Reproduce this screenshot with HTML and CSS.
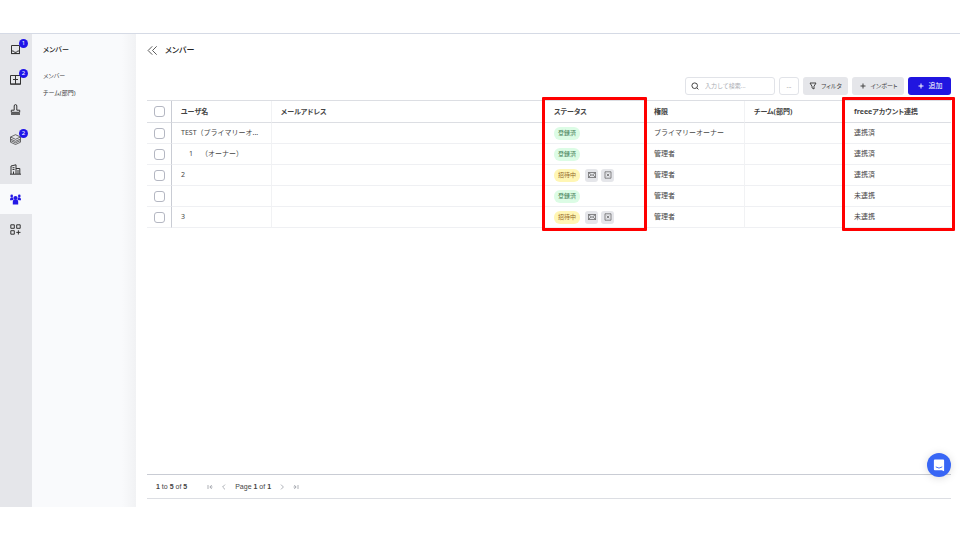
FILE: index.html
```html
<!DOCTYPE html>
<html lang="ja">
<head>
    <meta charset="UTF-8">
    <meta name="viewport" content="width=device-width, initial-scale=1.0">
    <title>メンバー</title>
    <link rel="stylesheet" href="styles.css">
</head>
<body>
    <div class="app">
        <nav class="rail" aria-label="メインメニュー">
            <a href="#" class="rail-item" aria-label="受信箱">
                <svg class="rail-icon" viewBox="0 0 11 11"><path d="M1.500 1.500h8v8h-8zM1.500 7h2l1 1.300h2l1-1.300h2M1 9.600h9"/></svg>
                <span class="badge">1</span>
            </a>
            <a href="#" class="rail-item" aria-label="ボード">
                <svg class="rail-icon" viewBox="0 0 11 11"><path d="M.5 1.500h10v8.500H.5zM5.500 1.500v8.500M3 5.500h5M.2 10.200h10.600"/></svg>
                <span class="badge">2</span>
            </a>
            <a href="#" class="rail-item" aria-label="承認">
                <svg class="rail-icon" viewBox="0 0 11 11"><path d="M1.300 8.300V6.200h2.900V2q0-1.400 1.300-1.400T6.800 2v4.200h2.900v2.100z"/><path d="M1 10h9" stroke-width="1.500"/></svg>
            </a>
            <a href="#" class="rail-item" aria-label="レイヤー">
                <svg class="rail-icon layers" viewBox="0 0 11 11"><path d="M5.500.7l5 2.300-5 2.300-5-2.300zM.5 3v2l5 2.300 5-2.300V3M.5 5v1.500l5 2.300 5-2.300V5M.5 6.500v1.700l5 2.300 5-2.300V6.500"/></svg>
                <span class="badge">2</span>
            </a>
            <a href="#" class="rail-item" aria-label="会社">
                <svg class="rail-icon" viewBox="0 0 11 11"><path d="M1 10V2l5-1.200V10M6 4.500h3.800V10M0 10.200h11M3.500 10V7.500M2.500 3.700h2M2.500 5.500h2M8 6v4"/></svg>
            </a>
            <a href="#" class="rail-item active" aria-label="メンバー">
                <svg class="rail-icon solid" viewBox="0 0 11 11"><circle cx="5.500" cy="4" r="2.100"/><circle cx="1.700" cy="1.900" r="1.300"/><circle cx="9.300" cy="1.900" r="1.300"/><path d="M2.800 10.600V7.800q0-2.200 2.700-2.200t2.700 2.200v2.800zM0 6.300q0-3.100 1.800-3.100L3 3.500q0 1.200.6 2L2.400 6.300zM11 6.300q0-3.100-1.800-3.100L8 3.500q0 1.200-.6 2l1.200.8z"/></svg>
            </a>
            <a href="#" class="rail-item" aria-label="アプリ">
                <svg class="rail-icon" viewBox="0 0 11 11"><path d="M.8.8h3.500v3.500H.8zM6.700.8h3.500v3.500H6.700zM.8 6.700h3.500v3.500H.8zM8.400 6.300v4.200M6.300 8.400h4.200"/></svg>
            </a>
        </nav>

        <aside class="sidebar">
            <h2 class="sidebar-title">メンバー</h2>
            <a href="#" class="sidebar-link">メンバー</a>
            <a href="#" class="sidebar-link">チーム(部門)</a>
        </aside>

        <main class="main">
            <header class="page-header">
                <button type="button" class="collapse" aria-label="メニューを閉じる">
                    <svg viewBox="0 0 10 10"><path d="M4.800 1.200L1 5l3.800 3.800M8.800 1.200L5 5l3.800 3.800"/></svg>
                </button>
                <h1 class="page-title">メンバー</h1>
            </header>

            <div class="toolbar">
                <label class="search">
                    <svg viewBox="0 0 8 8"><circle cx="3.700" cy="3.700" r="2.800"/><path d="M5.800 5.800l1.600 1.600"/></svg>
                    <input type="search" aria-label="検索" placeholder="入力して検索...">
                </label>
                <button type="button" class="btn btn-more">...</button>
                <button type="button" class="btn btn-filter">
                    <svg viewBox="0 0 8 8"><path d="M1 1h6L5 4.300V7L3 5.800V4.300z"/></svg>フィルタ
                </button>
                <button type="button" class="btn btn-import">
                    <svg viewBox="0 0 8 8"><path d="M4 1.500v5M1.500 4h5"/></svg>インポート
                </button>
                <button type="button" class="btn btn-add">
                    <svg viewBox="0 0 8 8"><path d="M4 1.500v5M1.500 4h5"/></svg>追加
                </button>
            </div>

            <div class="table-wrap">
                <table class="members">
                    <thead>
                        <tr>
                            <th class="col-check"><input type="checkbox" aria-label="すべて選択"></th>
                            <th class="col-name">ユーザ名</th>
                            <th>メールアドレス</th>
                            <th class="col-status">ステータス</th>
                            <th class="col-role">権限</th>
                            <th class="col-team">チーム(部門)</th>
                            <th class="col-freee">freeeアカウント連携</th>
                        </tr>
                    </thead>
                    <tbody>
                        <tr>
                            <td class="col-check"><input type="checkbox" aria-label="TESTを選択"></td>
                            <td>TEST（プライマリーオ...</td>
                            <td></td>
                            <td><span class="tag tag-done">登録済</span></td>
                            <td>プライマリーオーナー</td>
                            <td></td>
                            <td>連携済</td>
                        </tr>
                        <tr>
                            <td class="col-check"><input type="checkbox" aria-label="1を選択"></td>
                            <td><span class="indent">1</span>（オーナー）</td>
                            <td></td>
                            <td><span class="tag tag-done">登録済</span></td>
                            <td>管理者</td>
                            <td></td>
                            <td>連携済</td>
                        </tr>
                        <tr>
                            <td class="col-check"><input type="checkbox" aria-label="2を選択"></td>
                            <td>2</td>
                            <td></td>
                            <td>
                                <div class="status">
                                    <span class="tag tag-wait">招待中</span>
                                    <button type="button" class="mini" aria-label="再送"><svg viewBox="0 0 8 8"><path d="M.5 1.500h7v5h-7zM.5 1.500L4 4.500l3.500-3M.5 6.500l2.600-2.700M7.500 6.500L4.900 3.800"/></svg></button>
                                    <button type="button" class="mini" aria-label="取消"><svg viewBox="0 0 8 8"><path d="M1 .8h6v6.400H1zM2.800 2.800l2.400 2.400M5.200 2.800L2.800 5.200"/></svg></button>
                                </div>
                            </td>
                            <td>管理者</td>
                            <td></td>
                            <td>連携済</td>
                        </tr>
                        <tr>
                            <td class="col-check"><input type="checkbox" aria-label="メンバーを選択"></td>
                            <td></td>
                            <td></td>
                            <td><span class="tag tag-done">登録済</span></td>
                            <td>管理者</td>
                            <td></td>
                            <td>未連携</td>
                        </tr>
                        <tr>
                            <td class="col-check"><input type="checkbox" aria-label="3を選択"></td>
                            <td>3</td>
                            <td></td>
                            <td>
                                <div class="status">
                                    <span class="tag tag-wait">招待中</span>
                                    <button type="button" class="mini" aria-label="再送"><svg viewBox="0 0 8 8"><path d="M.5 1.500h7v5h-7zM.5 1.500L4 4.500l3.500-3M.5 6.500l2.600-2.700M7.500 6.500L4.900 3.800"/></svg></button>
                                    <button type="button" class="mini" aria-label="取消"><svg viewBox="0 0 8 8"><path d="M1 .8h6v6.400H1zM2.800 2.800l2.400 2.400M5.200 2.800L2.800 5.200"/></svg></button>
                                </div>
                            </td>
                            <td>管理者</td>
                            <td></td>
                            <td>未連携</td>
                        </tr>
                    </tbody>
                </table>
                <div class="mark mark-status"></div>
                <div class="mark mark-freee"></div>
            </div>

            <footer class="pager">
                <span class="pager-count"><b>1</b> to <b>5</b> of <b>5</b></span>
                <button type="button" aria-label="最初"><svg viewBox="0 0 6 6"><path d="M1 1v4M4.800 1l-2 2 2 2M3 3h2.500"/></svg></button>
                <button type="button" aria-label="前へ"><svg viewBox="0 0 6 6"><path d="M4 .6L1.600 3 4 5.400"/></svg></button>
                <span>Page <b>1</b> of <b>1</b></span>
                <button type="button" aria-label="次へ"><svg viewBox="0 0 6 6"><path d="M2 .6L4.400 3 2 5.400"/></svg></button>
                <button type="button" aria-label="最後"><svg viewBox="0 0 6 6"><path d="M5 1v4M1.200 1l2 2-2 2M3 3H.5"/></svg></button>
            </footer>
        </main>
    </div>

    <button type="button" class="chat" aria-label="チャット">
        <svg viewBox="0 0 12 14"><path class="chat-body" d="M1.500.5h9q1 0 1 1v11.800L9 12H1.500q-1 0-1-1V1.500q0-1 1-1z"/><path class="chat-smile" d="M2.500 8.500q3.500 2.600 7 0"/></svg>
    </button>
</body>
</html>
```

FILE: styles.css
```css
* {
    box-sizing: border-box;
}
body {
    display: flex;
    flex-direction: column;
    min-height: 100vh;
    margin: 0;
    padding: 33px 0;
    background-color: #fff;
    color: #444;
    font-family: "Noto Sans", "Noto Sans CJK JP", sans-serif;
    font-size: 7px;
    line-height: 10px;
}
h1, h2 {
    margin: 0;
    color: #222;
    font-weight: 500;
}
a {
    color: inherit;
    text-decoration: none;
}
button {
    padding: 0;
    border: none;
    background: none;
    color: inherit;
    font: inherit;
    cursor: pointer;
}
svg {
    flex: none;
    fill: none;
    stroke: currentColor;
}
.app {
    display: flex;
    flex: 1;
    border-top: 1px solid #d5dae5;
}

/* left icon rail */
.rail {
    width: 32px;
    background-color: #e5e6ea;
}
.rail-item {
    position: relative;
    display: flex;
    align-items: center;
    height: 30px;
    padding-left: 10px;
    color: #333;
}
.rail-item.active {
    background-color: #f9fafc;
    color: #2418e6;
}
.rail-icon {
    width: 11px;
    height: 11px;
}
.rail-icon.solid {
    fill: currentColor;
    stroke: none;
}
.rail-icon.layers {
    stroke-width: 0.7;
}
.badge {
    position: absolute;
    top: 5px;
    right: 4px;
    width: 9px;
    height: 9px;
    border-radius: 50%;
    background-color: #2015e8;
    color: #fff;
    font-size: 6px;
    line-height: 9px;
    text-align: center;
}

/* sub menu */
.sidebar {
    width: 104px;
    padding: 10px 11px;
    background: linear-gradient(to right, #f9fafc 90px, #f1f2f4);
    font-feature-settings: "palt";
}
.sidebar-title {
    margin-bottom: 15px;
    font-size: 7px;
    line-height: 12px;
}
.sidebar-link {
    display: block;
    margin-bottom: 7px;
    font-size: 6px;
}

.main {
    display: flex;
    flex: 1;
    flex-direction: column;
    min-width: 0;
    padding: 9px 9px 8px 11px;
}
.page-header {
    display: flex;
    align-items: center;
    gap: 7px;
    height: 14px;
}
.collapse,
.collapse svg {
    display: block;
    width: 11px;
    height: 11px;
}
.collapse svg {
    stroke-width: 0.8;
}
.page-title {
    font-size: 8px;
    font-feature-settings: "palt";
}

.toolbar {
    display: flex;
    justify-content: flex-end;
    gap: 4px;
    margin-top: 20px;
}
.search,
.btn {
    display: flex;
    align-items: center;
    height: 18px;
    border-radius: 3px;
}
.search {
    gap: 6px;
    width: 90px;
    padding: 0 5px;
    border: 1px solid #e1e3e8;
}
.search svg,
.btn svg {
    width: 8px;
    height: 8px;
}
.search input {
    width: 100%;
    min-width: 0;
    padding: 0;
    border: none;
    outline: none;
    background: none;
    font: inherit;
    font-size: 6px;
}
.search input::placeholder {
    color: #a9acb3;
}
.btn {
    justify-content: center;
    gap: 4px;
    background-color: #e5e6ea;
    font-size: 6px;
    font-feature-settings: "palt";
}
.btn-more {
    width: 20px;
    border: 1px solid #e1e3e8;
    background-color: #fff;
    color: #888;
}
.btn-filter {
    width: 45px;
}
.btn-import {
    width: 52px;
}
.btn-add {
    width: 43px;
    background-color: #2015e0;
    color: #fff;
    font-size: 7px;
}

/* member list */
.table-wrap {
    position: relative;
    margin-top: 5px;
}
.members {
    width: 100%;
    table-layout: fixed;
    border-collapse: separate;
    border-spacing: 0;
    border-top: 1px solid #dcdee3;
}
th, td {
    height: 21px;
    padding: 0 9px;
    border-right: 1px solid #f1f2f4;
    border-bottom: 1px solid #eff0f3;
    text-align: left;
    white-space: nowrap;
}
th {
    height: 22px;
    border-bottom-color: #dcdee3;
    font-weight: 700;
    font-feature-settings: "palt";
}
th:nth-child(3), td:nth-child(3),
th:nth-child(4), td:nth-child(4),
th:last-child, td:last-child {
    border-right: none;
}
.col-check {
    width: 25px;
    padding: 0 6px 0 7px;
    border-right-color: #c9ccd4;
}
.col-name,
.col-status,
.col-role,
.col-team {
    width: 100px;
}
.col-freee {
    width: 106px;
}
.members input {
    display: block;
    width: 11px;
    height: 11px;
    margin: 0;
    appearance: none;
    border: 1px solid #b4b7c2;
    border-radius: 3px;
    background-color: #fff;
}
.indent {
    margin: 0 8px;
}
.status {
    display: flex;
    align-items: center;
    gap: 3px;
}
.tag {
    display: inline-block;
    padding: 0 4px;
    border-radius: 6px;
    font-size: 6px;
    line-height: 13px;
    vertical-align: middle;
}
.tag-done {
    background-color: #dcfce5;
    color: #3d7a52;
}
.tag-wait {
    margin-right: 2px;
    background-color: #fff6b5;
    color: #94682a;
}
.mini {
    display: flex;
    align-items: center;
    justify-content: center;
    width: 13px;
    height: 13px;
    border-radius: 3px;
    background-color: #e5e6ea;
}
.mini svg {
    width: 8px;
    height: 8px;
    stroke-width: 0.6;
}

/* highlighted columns */
.mark {
    position: absolute;
    top: -3px;
    bottom: -3px;
    border: 3px solid #f00;
    border-radius: 1px;
    pointer-events: none;
}
.mark-status {
    right: 304px;
    width: 105px;
}
.mark-freee {
    right: -4px;
    width: 113px;
}

.pager {
    display: flex;
    align-items: center;
    gap: 8px;
    height: 25px;
    margin-top: auto;
    padding: 0 9px;
    border-top: 1px solid #c9ccd4;
    border-bottom: 1px solid #dcdee3;
    font-family: "Liberation Sans", sans-serif;
    font-size: 7px;
}
.pager-count {
    margin-right: 12px;
}
.pager button,
.pager svg {
    display: block;
    width: 6px;
    height: 6px;
    color: #8c9099;
    stroke-width: 0.7;
}

.chat {
    position: fixed;
    right: 9px;
    bottom: 63px;
    display: flex;
    align-items: center;
    justify-content: center;
    width: 24px;
    height: 24px;
    border-radius: 50%;
    background-color: #3866f5;
    box-shadow: 0 1px 8px rgba(0, 0, 0, 0.15);
}
.chat svg {
    width: 12px;
    height: 13px;
    stroke: none;
}
.chat-body {
    fill: #fff;
}
.chat-smile {
    stroke: #3866f5;
}
```
